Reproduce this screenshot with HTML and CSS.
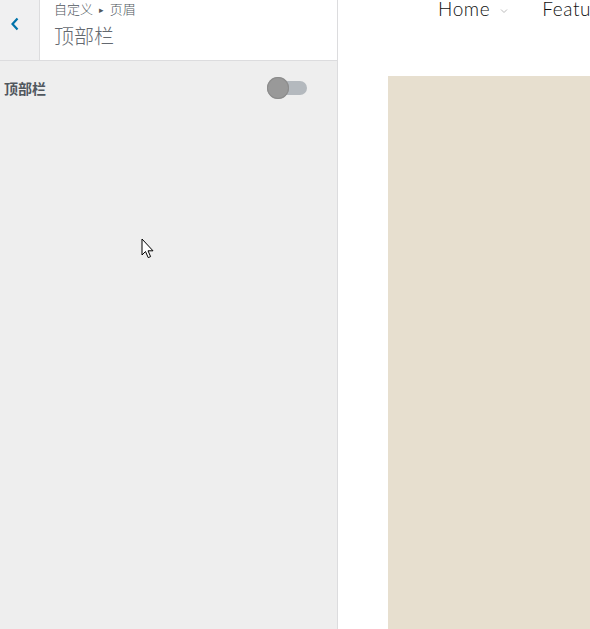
FILE: index.html
```
<!DOCTYPE html>
<html lang="zh">
<head>
<meta charset="utf-8">
<link rel="stylesheet" href="styles.css">
</head>
<body>
<div class="app">
  <aside class="sidebar">
    <div class="section-head">
      <button class="back" aria-label="返回">
        <svg width="12" height="16" viewBox="0 0 12 16"><path d="M8.5 2.5 L3.5 8 L8.5 13.5" fill="none" stroke="#0073aa" stroke-width="2.2"/></svg>
      </button>
      <div class="titles">
        <div class="crumb">自定义 <span class="tri">▸</span> 页眉</div>
        <h3 class="title">顶部栏</h3>
      </div>
    </div>
    <div class="control">
      <span class="label">顶部栏</span>
      <span class="toggle"><span class="track"></span><span class="knob"></span></span>
    </div>
  </aside>
  <main class="preview">
    <nav class="nav">
      <span class="nav-item">Home <svg class="caret" width="8" height="6" viewBox="0 0 8 6"><path d="M1 1.5 L4 4.5 L7 1.5" fill="none" stroke="#bbb" stroke-width="1"/></svg></span>
      <span class="nav-item">Features</span>
    </nav>
    <div class="hero"></div>
  </main>
</div>
<svg class="cursor" width="14" height="22" viewBox="0 0 14 22"><path d="M1 1 L1 17 L4.5 13.5 L7.2 19.6 L9.6 18.6 L7 12.8 L12 12.8 Z" fill="#fff" stroke="#000" stroke-width="1" stroke-linejoin="round"/></svg>
</body>
</html>
```
FILE: styles.css
```
html, body { margin: 0; padding: 0; height: 100%; overflow: hidden; }
body { font-family: "Noto Sans CJK SC", "Noto Sans", sans-serif; background: #fff; }
.app { display: flex; height: 629px; }
.sidebar { width: 337px; background: #eeeeee; border-right: 1px solid #dcdcde; flex: none; }
.section-head { display: flex; height: 60px; background: #fff; border-bottom: 1px solid #dcdcde; }
.back { width: 40px; flex: none; border: 0; border-right: 1px solid #dcdcde; background: #f0f0f1; padding: 0 10px 13px 0; display: flex; align-items: center; justify-content: center; margin: 0; }
.titles { padding-left: 14px; }
.crumb { font-size: 13px; font-weight: 300; color: #50575e; line-height: 18px; margin-top: 0; }
.tri { font-size: 9px; color: #50575e; position: relative; top: -1px; margin: 0 3px; }
.title { margin: 3px 0 0; font-size: 20px; font-weight: 300; color: #646970; line-height: 26px; }
.control { display: flex; align-items: center; justify-content: space-between; padding: 15px 30px 0 4px; }
.label { font-size: 14px; font-weight: 700; color: #50575e; line-height: 22px; }
.toggle { position: relative; width: 40px; height: 22px; margin-top: 2px; }
.track { position: absolute; left: 11px; top: 3px; width: 29px; height: 14px; border-radius: 7px; background: #b4b9be; }
.knob { position: absolute; left: 0; top: -1px; width: 22px; height: 22px; border-radius: 50%; background: #999; box-shadow: inset 0 0 0 1px #8c8c8c; }
.preview { flex: 1; position: relative; overflow: hidden; }
.nav { display: flex; align-items: flex-start; gap: 34px; padding-left: 100px; margin-top: -3px; white-space: nowrap; font-family: "Lato", "Open Sans", sans-serif; font-weight: 300; font-size: 19px; color: #111; letter-spacing: 0.6px; height: 79px; }
.nav-item { display: inline-flex; align-items: center; gap: 10px; line-height: 24px; }
.caret { margin-top: 4px; }
.hero { margin-left: 50px; height: 560px; background: #e7dfcf; }
.cursor { position: absolute; left: 141px; top: 238px; }
```
